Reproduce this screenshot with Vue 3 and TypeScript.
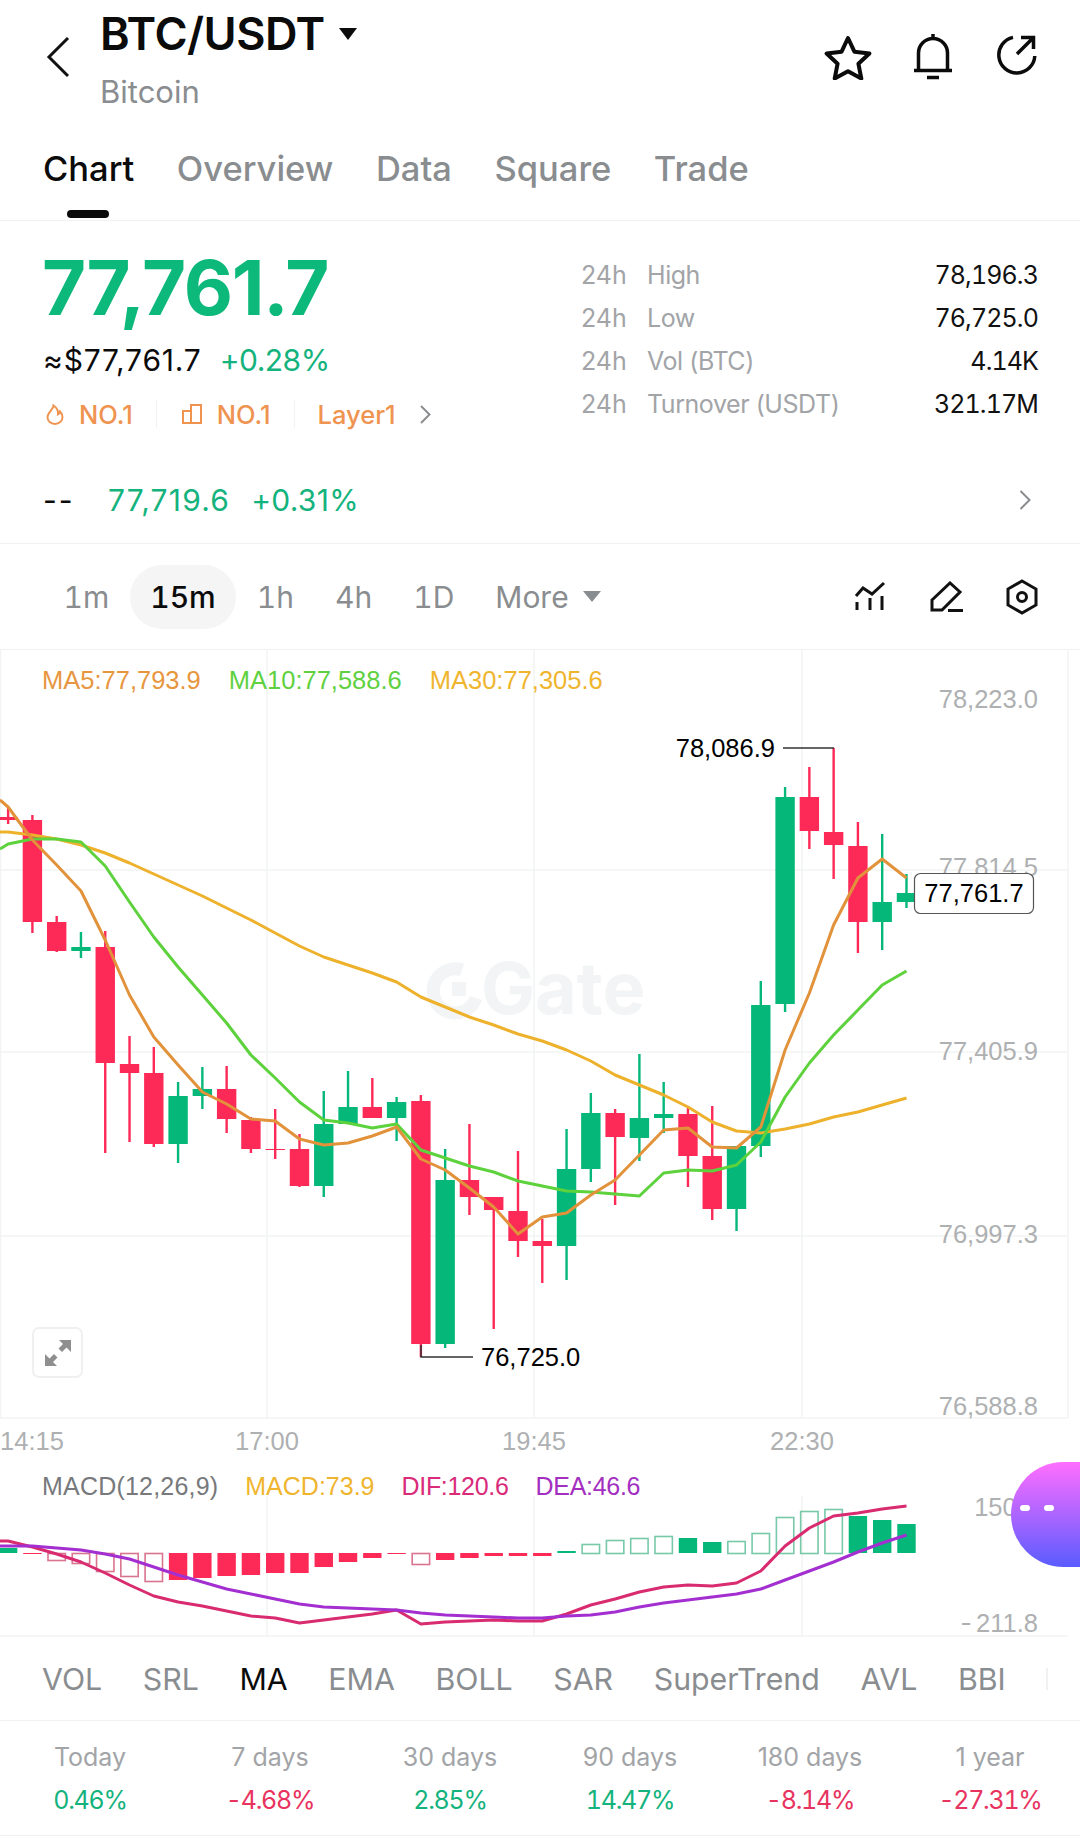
<script setup lang="ts">
type Candle = [string, number, number, number, number]

const RED = '#fd2a58'
const GREEN = '#05b87a'
const candleStep = 24.28
const candleX = (i: number) => 32.4 + i * candleStep

// kind, body top, body bottom, wick top, wick bottom. first one is the clipped candle at x=8
const candles: Candle[] = [
  ['r', 817, 820, 807, 824],
  ['r', 820, 922, 815, 933],
  ['r', 922, 951, 916, 952],
  ['g', 947, 951, 932, 958],
  ['r', 947, 1063, 931, 1153],
  ['r', 1064, 1073, 1036, 1142],
  ['r', 1073, 1144, 1047, 1147],
  ['g', 1096, 1144, 1082, 1163],
  ['g', 1089, 1096, 1067, 1109],
  ['r', 1089, 1119, 1066, 1133],
  ['r', 1120, 1149, 1117, 1153],
  ['r', 1149, 1150, 1109, 1159],
  ['r', 1149, 1186, 1134, 1187],
  ['g', 1124, 1186, 1091, 1197],
  ['g', 1107, 1124, 1071, 1124],
  ['r', 1107, 1118, 1078, 1118],
  ['g', 1102, 1118, 1097, 1141],
  ['r', 1101, 1344, 1095, 1357],
  ['g', 1180, 1344, 1149, 1348],
  ['r', 1180, 1197, 1124, 1215],
  ['r', 1197, 1210, 1197, 1329],
  ['r', 1211, 1241, 1151, 1257],
  ['r', 1241, 1246, 1219, 1283],
  ['g', 1169, 1246, 1129, 1280],
  ['g', 1113, 1169, 1093, 1182],
  ['r', 1113, 1137, 1109, 1205],
  ['g', 1118, 1138, 1054, 1161],
  ['g', 1114, 1118, 1082, 1133],
  ['r', 1114, 1156, 1108, 1187],
  ['r', 1156, 1209, 1106, 1220],
  ['g', 1146, 1209, 1146, 1231],
  ['g', 1005, 1146, 981, 1157],
  ['g', 797, 1004, 787, 1012],
  ['r', 797, 831, 767, 849],
  ['r', 832, 845, 748, 879],
  ['r', 846, 922, 822, 953],
  ['g', 902, 922, 834, 950],
  ['g', 893, 902, 874, 908],
]

const toPoints = (ys: number[], startY: number) =>
  `0,${startY} ` + ys.map((y, i) => `${candleX(i - 1).toFixed(1)},${y}`).join(' ')

const ma5 = toPoints([807, 840, 865, 891, 940, 995, 1037, 1065, 1092, 1104, 1119, 1121, 1139, 1145, 1143, 1136, 1127, 1159, 1170, 1188, 1207, 1234, 1217, 1213, 1195, 1180, 1155, 1130, 1128, 1147, 1148, 1127, 1050, 993, 925, 878, 859, 878], 800)
const ma10 = toPoints([844, 839, 839, 842, 866, 902, 937, 967, 995, 1023, 1055, 1078, 1102, 1120, 1123, 1128, 1124, 1150, 1158, 1166, 1172, 1181, 1186, 1191, 1192, 1194, 1196, 1173, 1170, 1171, 1165, 1142, 1097, 1063, 1035, 1010, 985, 971], 849)
const ma30 = toPoints([832, 835, 839, 845, 853, 863, 874, 885, 896, 908, 920, 933, 946, 957, 965, 973, 982, 997, 1007, 1017, 1025, 1034, 1041, 1050, 1061, 1075, 1085, 1095, 1107, 1122, 1131, 1133, 1129, 1124, 1117, 1112, 1105, 1098], 832)

const priceLabels = [
  { text: '78,223.0', y: 708 },
  { text: '77,814.5', y: 876 },
  { text: '77,405.9', y: 1060 },
  { text: '76,997.3', y: 1243 },
  { text: '76,588.8', y: 1415 },
]
const timeLabels = [
  { text: '14:15', x: 32 },
  { text: '17:00', x: 267 },
  { text: '19:45', x: 534 },
  { text: '22:30', x: 802 },
]

// kind, edge y, hollow. zero line sits at 1554
const MACD_ZERO = 1554
const bars: [string, number, boolean][] = [
  ['g', 1549, false], ['r', 1555, false], ['r', 1561, true], ['r', 1564, true], ['r', 1572, true],
  ['r', 1577, true], ['r', 1582, true], ['r', 1581, false], ['r', 1579, false], ['r', 1577, false],
  ['r', 1576, false], ['r', 1574, false], ['r', 1574, false], ['r', 1568, false], ['r', 1563, false],
  ['r', 1559, false], ['r', 1555, false], ['r', 1565, true], ['r', 1561, false], ['r', 1559, false],
  ['r', 1557, false], ['r', 1557, false], ['r', 1557, false], ['g', 1552, false], ['g', 1545, true],
  ['g', 1541, true], ['g', 1539, true], ['g', 1537, true], ['g', 1539, false], ['g', 1543, false],
  ['g', 1542, true], ['g', 1534, true], ['g', 1518, true], ['g', 1512, true], ['g', 1510, true],
  ['g', 1517, false], ['g', 1521, false], ['g', 1525, false],
]
const dif = toPoints([1542, 1548, 1555, 1563, 1574, 1586, 1597, 1603, 1607, 1612, 1617, 1619, 1624, 1621, 1618, 1615, 1611, 1625, 1623, 1622, 1621, 1622, 1622, 1615, 1606, 1600, 1593, 1588, 1586, 1587, 1584, 1572, 1547, 1529, 1517, 1514, 1510, 1507], 1542)
const dea = toPoints([1547, 1547, 1549, 1551, 1555, 1560, 1568, 1576, 1583, 1590, 1595, 1600, 1605, 1608, 1609, 1610, 1611, 1614, 1616, 1617, 1618, 1619, 1619, 1617, 1616, 1613, 1608, 1604, 1601, 1598, 1595, 1590, 1581, 1572, 1563, 1553, 1544, 1536], 1547)

const tabs = ['Chart', 'Overview', 'Data', 'Square', 'Trade']
const stats = [
  { label: 'High', value: '78,196.3' },
  { label: 'Low', value: '76,725.0' },
  { label: 'Vol (BTC)', value: '4.14K' },
  { label: 'Turnover (USDT)', value: '321.17M' },
]
const periods = ['1m', '15m', '1h', '4h', '1D']
const indicators = ['VOL', 'SRL', 'MA', 'EMA', 'BOLL', 'SAR', 'SuperTrend', 'AVL', 'BBI']
const returns = [
  { label: 'Today', value: '0.46%', up: true },
  { label: '7 days', value: '-4.68%', up: false },
  { label: '30 days', value: '2.85%', up: true },
  { label: '90 days', value: '14.47%', up: true },
  { label: '180 days', value: '-8.14%', up: false },
  { label: '1 year', value: '-27.31%', up: false },
]
</script>

<template>
  <div class="page">
    <header class="header">
      <svg class="back" width="24" height="42" viewBox="0 0 24 42" fill="none">
        <path d="M22 2 3 21l19 19" stroke="#111" stroke-width="3" />
      </svg>
      <div class="title-block">
        <div class="title">BTC/USDT<span class="caret"></span></div>
        <div class="subtitle">Bitcoin</div>
      </div>
      <div class="actions">
        <svg width="48" height="46" viewBox="0 0 48 46" fill="none" stroke="#0b0b0b" stroke-width="4" stroke-linejoin="round">
          <path d="M24 4l6.4 13.7 15 1.8-11 10.2 2.9 14.8L24 37.2 10.700 44.500 13.600 29.700 2.600 19.500l15-1.800z" />
        </svg>
        <svg width="40" height="46" viewBox="0 0 40 46" fill="none" stroke="#0b0b0b" stroke-width="3.500">
          <path d="M20 0v4M5.500 36V19a14.500 14.500 0 0 1 29 0v17M1 36.500h38" />
          <path d="M14 43.500h12" stroke-width="3.500" />
        </svg>
        <svg class="action-share" width="42" height="42" viewBox="0 0 42 42" fill="none" stroke="#0b0b0b" stroke-width="3.500">
          <path d="M17 3.400A18 18 0 1 0 38.800 22" />
          <path d="M21 20 36 5M25 3.500h12.500V15" />
        </svg>
      </div>
    </header>

    <nav class="tabs">
      <span v-for="(t, i) in tabs" :key="t" class="tab" :class="{ active: i === 0 }">{{ t }}</span>
    </nav>

    <section class="quote">
      <div class="quote-left">
        <div class="price">77,761.7</div>
        <div class="sub-price">
          <span class="usd">≈$77,761.7</span>
          <span class="green">+0.28%</span>
        </div>
        <div class="rank-row">
          <svg width="18" height="21" viewBox="0 0 18 21" fill="none" stroke="#ef9350" stroke-width="2">
            <path d="M7.500 1.500c.5 3.500-6 6.500-6 12a7.500 6.500 0 0 0 15 0c0-2.500-1-4.500-2.500-6-.3 1.500-1 2.300-2 2.800C12.300 7 10.500 3.500 7.500 1.500z" />
          </svg>
          <span class="rank">NO.1</span>
          <i class="rank-sep rank-sep-first"></i>
          <svg width="20" height="20" viewBox="0 0 20 20" fill="none" stroke="#ef9350" stroke-width="2">
            <path d="M1 7h8v12H1zM9 1h10v18H9z" />
          </svg>
          <span class="rank">NO.1</span>
          <i class="rank-sep"></i>
          <span class="rank">Layer1</span>
          <svg class="rank-more" width="11" height="19" viewBox="0 0 11 19" fill="none" stroke="#8a8c8f" stroke-width="2">
            <path d="M1 1l8.500 8.500L1 18" />
          </svg>
        </div>
      </div>
      <div class="stats">
        <div v-for="s in stats" :key="s.label" class="stat">
          <span class="stat-24">24h</span>
          <span class="stat-label">{{ s.label }}</span>
          <span class="stat-value">{{ s.value }}</span>
        </div>
      </div>
      <div class="mark-row">
        <span class="dashes">--</span>
        <span class="green mark mark-price">77,719.6</span>
        <span class="green mark mark-change">+0.31%</span>
        <svg class="mark-more" width="13" height="20" viewBox="0 0 13 20" fill="none" stroke="#8a8c8f" stroke-width="2">
          <path d="M1.500 1l9 9-9 9" />
        </svg>
      </div>
    </section>

    <section class="periods">
      <span v-for="(p, i) in periods" :key="p" class="period" :class="{ active: i === 1 }">{{ p }}</span>
      <span class="period more">More<span class="more-caret"></span></span>
      <div class="tools">
        <svg class="tool-chart" width="32" height="32" viewBox="0 0 32 32" fill="none" stroke="#111" stroke-width="3">
          <path d="M2 15l7-8 9 6L30 2M3 21v8M16 17v12M28 15v14" />
        </svg>
        <svg width="34" height="32" viewBox="0 0 34 32" fill="none" stroke="#111" stroke-width="3">
          <path d="M2 19 20 2l10 9-18 18H2zM18 29.500h15" />
        </svg>
        <svg width="32" height="36" viewBox="0 0 32 36" fill="none" stroke="#111" stroke-width="3">
          <path d="M16 2l14 8v16l-14 8-14-8V10z" />
          <circle cx="16" cy="18" r="4.500" />
        </svg>
      </div>
    </section>

    <section class="chart">
      <svg class="chart-svg" width="1080" height="812" viewBox="0 650 1080 812">
        <g stroke="#f2f3f4" stroke-width="1.500">
          <path d="M0 870H1068M0 1052H1068M0 1236H1068M0 1418H1068" />
          <path d="M0.500 650V1418M267 650V1418M534 650V1418M802 650V1418M1068 650V1418" />
        </g>
        <g class="watermark">
          <path d="M462 970a22 22 0 1 0 14 28" fill="none" stroke="#f2f4f5" stroke-width="13" />
          <rect x="452" y="982" width="14" height="14" fill="#f2f4f5" />
          <text x="481" y="1014">Gate</text>
        </g>
        <g v-for="(c, i) in candles" :key="i">
          <rect :x="candleX(i - 1) - 1.200" :y="c[3]" width="2.400" :height="c[4] - c[3]" :fill="c[0] === 'r' ? RED : GREEN" />
          <rect :x="candleX(i - 1) - 9.700" :y="c[1]" width="19.400" :height="c[2] - c[1]" :fill="c[0] === 'r' ? RED : GREEN" />
        </g>
        <g fill="none" stroke-width="3" stroke-linejoin="round">
          <polyline :points="ma30" stroke="#edb12c" />
          <polyline :points="ma10" stroke="#5dd23c" />
          <polyline :points="ma5" stroke="#e1923a" />
        </g>
        <text v-for="p in priceLabels" :key="p.text" class="axis" x="1038" :y="p.y" text-anchor="end">{{ p.text }}</text>
        <text v-for="t in timeLabels" :key="t.text" class="axis" :x="t.x" y="1450" text-anchor="middle">{{ t.text }}</text>

        <path d="M783 748H834M421 1345V1357H473" fill="none" stroke="#333" stroke-width="1.500" />
        <text class="mark-label" x="775" y="757" text-anchor="end">78,086.9</text>
        <text class="mark-label" x="481" y="1366">76,725.0</text>

        <rect x="914.500" y="873.500" width="119" height="40" rx="6" fill="#fff" stroke="#555" stroke-width="1.200" />
        <text class="mark-label" x="974" y="902" text-anchor="middle">77,761.7</text>
      </svg>
      <div class="legend ma-legend">
        <span class="ma5">MA5:77,793.9</span>
        <span class="ma10">MA10:77,588.6</span>
        <span class="ma30">MA30:77,305.6</span>
      </div>
      <button class="expand">
        <svg width="26" height="26" viewBox="0 0 26 26" fill="#8f8f8f">
          <path d="M14 0h12v12l-4.500-4.500-4.500 4.500-3.500-3.500L18 4zM0 26V14l4.500 4.500L9 14l3.500 3.500L8 22l4 4z" />
        </svg>
      </button>
    </section>

    <section class="macd">
      <svg class="macd-svg" width="1080" height="175" viewBox="0 1463 1080 175">
        <g stroke="#f2f3f4" stroke-width="1.500">
          <path d="M0 1637H1068M267 1497V1637M534 1497V1637M802 1497V1637" />
        </g>
        <g v-for="(b, i) in bars" :key="i">
          <rect
            v-if="b[2]"
            :x="candleX(i - 1) - 8.700"
            :y="Math.min(b[1], MACD_ZERO) + 0.500"
            width="17.400"
            :height="Math.abs(b[1] - MACD_ZERO)"
            fill="#fff"
            fill-opacity="0"
            :stroke="b[0] === 'r' ? '#d9748f' : '#77c9a9'"
            stroke-width="1.600"
          />
          <rect
            v-else
            :x="candleX(i - 1) - 9.200"
            :y="Math.min(b[1], MACD_ZERO)"
            width="18.400"
            :height="Math.abs(b[1] - MACD_ZERO)"
            :fill="b[0] === 'r' ? RED : GREEN"
          />
        </g>
        <g fill="none" stroke-width="3" stroke-linejoin="round">
          <polyline :points="dif" stroke="#d92b6f" />
          <polyline :points="dea" stroke="#a32fd0" />
        </g>
        <text class="axis" x="1038" y="1517" text-anchor="end">150.0</text>
        <text class="axis" x="1038" y="1633" text-anchor="end"><tspan class="wide-minus">-</tspan>211.8</text>
      </svg>
      <div class="legend macd-legend">
        <span class="macd-name">MACD(12,26,9)</span>
        <span class="ma30">MACD:73.9</span>
        <span class="dif">DIF:120.6</span>
        <span class="dea">DEA:46.6</span>
      </div>
      <div class="orb"><i></i><i></i></div>
    </section>

    <nav class="indicators">
      <span v-for="n in indicators" :key="n" class="indicator" :class="{ active: n === 'MA' }">{{ n }}</span>
      <i class="indicator-next"></i>
    </nav>

    <section class="returns">
      <div v-for="r in returns" :key="r.label" class="return-col">
        <span class="return-label">{{ r.label }}</span>
        <span class="return-value" :class="r.up ? 'green' : 'red'">{{ r.value }}</span>
      </div>
    </section>
  </div>
</template>

<style>
html,
body {
  margin: 0;
  background: #fff;
}
</style>

<style scoped>
.page {
  width: 1080px;
  height: 1844px;
  overflow: hidden;
  background: #fff;
  font-family: Inter, "Liberation Sans", sans-serif;
  color: #0b0b0b;
}

.header {
  height: 122px;
  display: flex;
  align-items: flex-start;
  position: relative;
  box-sizing: border-box;
  padding-left: 46px;
}

.back {
  margin-top: 36px;
}

.title-block {
  margin-left: 30px;
}

.title {
  font-size: 45px;
  font-weight: 600;
  letter-spacing: -0.500px;
  line-height: 54px;
  margin-top: 7px;
  display: flex;
}

.caret {
  width: 0;
  height: 0;
  margin: 21px 0 0 14px;
  border-left: 9px solid transparent;
  border-right: 9px solid transparent;
  border-top: 12px solid #0b0b0b;
}

.subtitle {
  font-size: 31px;
  line-height: 36px;
  margin-top: 13px;
  color: #8a8d90;
}

.actions {
  margin-left: auto;
  margin-right: 42px;
  margin-top: 34px;
  display: flex;
  align-items: flex-start;
  gap: 41px;
}

.action-share {
  margin-left: 2px;
}

.tabs {
  height: 99px;
  box-sizing: border-box;
  border-bottom: 1px solid #f0f1f2;
  padding: 25px 0 0 43px;
  display: flex;
  gap: 42.500px;
}

.tab {
  font-size: 34.500px;
  font-weight: 500;
  line-height: 44px;
  color: #8a8d90;
  position: relative;
}

.tab.active {
  color: #0b0b0b;
}

.tab.active::after {
  content: "";
  position: absolute;
  left: 24px;
  top: 63px;
  width: 42px;
  height: 8px;
  border-radius: 4px;
  background: #0b0b0b;
}

.quote {
  height: 323px;
  box-sizing: border-box;
  border-bottom: 1px solid #f0f1f2;
  position: relative;
  display: flex;
  flex-wrap: wrap;
  align-content: flex-start;
  padding: 0 42px 0 43px;
}

.quote-left {
  width: 538px;
}

.price {
  font-size: 76px;
  font-weight: 700;
  letter-spacing: -1.300px;
  line-height: 92px;
  margin-top: 20px;
  margin-left: -1px;
  color: #0cb87a;
}

.sub-price {
  display: flex;
  gap: 18px;
  font-size: 30px;
  line-height: 40px;
  margin-top: 7px;
  letter-spacing: -0.500px;
}

.usd {
  letter-spacing: 0.800px;
}

.green {
  color: #14b37d;
}

.red {
  color: #e8335f;
}

.rank-row {
  display: flex;
  align-items: center;
  margin-top: 18px;
  height: 32px;
  color: #ef9350;
}

.rank-row svg:first-child {
  margin-left: 3px;
}

.rank {
  font-size: 25.500px;
  font-weight: 500;
  margin-left: 15px;
}

.rank-sep {
  width: 1px;
  height: 28px;
  background: #f2f2f2;
  margin: 0 23px 0 23px;
}

.rank-sep-first {
  margin-right: 25px;
}

.rank-sep + .rank {
  margin-left: 0;
}

.rank-more {
  margin-left: 24px;
}

.stats {
  width: 457px;
  padding-top: 33px;
}

.stat {
  display: flex;
  font-size: 25px;
  line-height: 43px;
  height: 43px;
}

.stat-24 {
  width: 66px;
  color: #a2a4a7;
}

.stat-label {
  color: #a2a4a7;
  letter-spacing: -0.450px;
}

.stat-value {
  margin-left: auto;
  color: #111;
  font-variant-numeric: tabular-nums;
  letter-spacing: -0.900px;
}

.mark-row {
  position: absolute;
  left: 43px;
  right: 48px;
  top: 259px;
  display: flex;
  align-items: center;
  font-size: 30px;
  line-height: 40px;
}

.dashes {
  width: 65px;
  letter-spacing: 2px;
}

.mark {
  margin-right: 21px;
}

.mark-price {
  letter-spacing: 1.200px;
}

.mark-change {
  letter-spacing: 0.300px;
}

.mark-more {
  margin-left: auto;
}

.periods {
  height: 106px;
  box-sizing: border-box;
  border-bottom: 1px solid #f0f1f2;
  display: flex;
  align-items: center;
  padding: 0 42px 0 43px;
  font-size: 30px;
  font-variant-numeric: tabular-nums;
  color: #8a8d90;
}

.period {
  padding: 0 20.500px;
  line-height: 64px;
}

.period.active {
  color: #0b0b0b;
  font-weight: 500;
  background: #f5f5f5;
  border-radius: 32px;
}

.more {
  display: flex;
  align-items: center;
}

.more-caret {
  width: 0;
  height: 0;
  margin-left: 14px;
  border-left: 9px solid transparent;
  border-right: 9px solid transparent;
  border-top: 11px solid #8a8d90;
}

.tools {
  margin-left: auto;
  display: flex;
  align-items: center;
  gap: 42px;
}

.tool-chart {
  margin-right: 2px;
}

.chart {
  position: relative;
  height: 812px;
}

.chart-svg,
.macd-svg {
  display: block;
}

.axis {
  font-family: "Liberation Sans", sans-serif;
  font-size: 25.500px;
  fill: #aeb0b2;
}

.wide-minus {
  font-family: Inter, sans-serif;
  letter-spacing: 4px;
}

.mark-label {
  font-family: "Liberation Sans", sans-serif;
  font-size: 25.500px;
  fill: #000;
}

.watermark text {
  font-family: Inter, sans-serif;
  font-size: 72px;
  font-weight: 700;
  fill: #f2f4f5;
}

.legend {
  position: absolute;
  left: 42px;
  display: flex;
  font-family: "Liberation Sans", sans-serif;
  font-size: 25.500px;
  line-height: 30px;
}

.ma-legend {
  top: 15px;
  gap: 28px;
}

.macd-legend {
  top: 9px;
  gap: 27px;
  font-size: 25px;
}

.ma5 {
  color: #e79640;
}

.ma10 {
  color: #5fd140;
}

.ma30 {
  color: #efb52e;
}

.macd-name {
  color: #77797c;
  letter-spacing: 0.200px;
}

.dif {
  color: #d92b7a;
  letter-spacing: -0.300px;
}

.dea {
  color: #a32fc0;
  letter-spacing: -0.300px;
}

.expand {
  position: absolute;
  left: 32px;
  top: 677px;
  width: 51px;
  height: 51px;
  padding: 0;
  box-sizing: border-box;
  border: 2px solid #f0f0f0;
  border-radius: 7px;
  background: #fff;
  display: flex;
  align-items: center;
  justify-content: center;
}

.macd {
  position: relative;
  height: 175px;
}

.orb {
  position: absolute;
  right: 0;
  top: 0;
  width: 69px;
  height: 105px;
  border-radius: 53px 0 0 53px;
  background: linear-gradient(to bottom, #ff6eff, #5a5cff);
  display: flex;
  gap: 14px;
  padding: 43px 0 0 9px;
  box-sizing: border-box;
}

.orb i {
  width: 10px;
  height: 6px;
  border-radius: 3px;
  background: #fff;
}

.indicators {
  height: 84px;
  box-sizing: border-box;
  border-bottom: 1px solid #f0f1f2;
  display: flex;
  align-items: center;
  gap: 40.600px;
  padding-left: 42px;
  font-size: 30.300px;
  color: #8a8d90;
}

.indicator.active {
  color: #0b0b0b;
}

.indicator-next {
  width: 2px;
  height: 22px;
  background: #f0f1f2;
}

.returns {
  height: 115px;
  box-sizing: border-box;
  border-bottom: 1px solid #f0f1f2;
  display: grid;
  grid-template-columns: repeat(6, 180px);
  font-size: 25px;
}

.return-col {
  display: flex;
  flex-direction: column;
  align-items: center;
  gap: 13px;
  padding-top: 21px;
  line-height: 30px;
}

.return-label {
  color: #a2a4a7;
}

.return-value {
  font-variant-numeric: tabular-nums;
  letter-spacing: -1.300px;
}
</style>
